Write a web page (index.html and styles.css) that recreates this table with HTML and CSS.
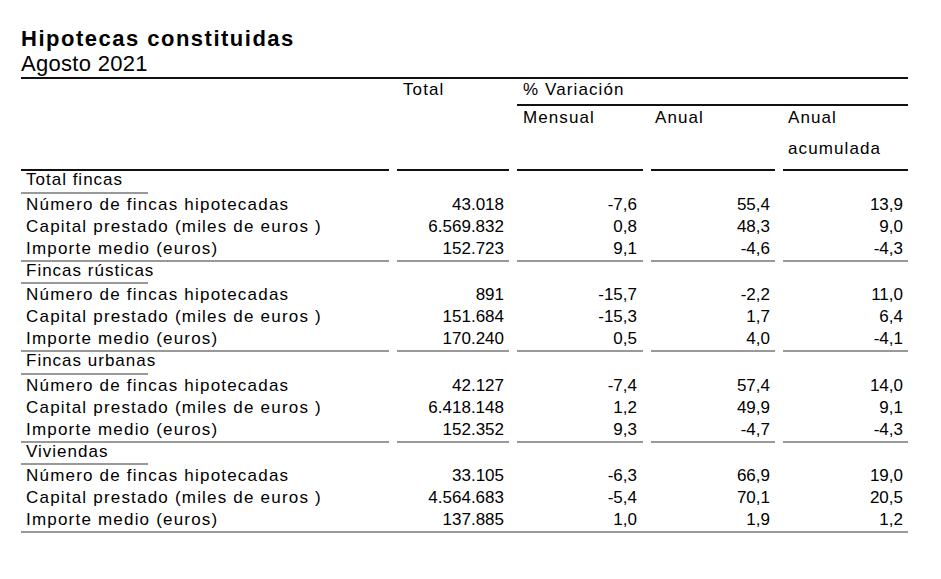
FILE: index.html
```html
<!DOCTYPE html>
<html lang="es">
<head>
<meta charset="utf-8">
<title>Hipotecas constituidas</title>
<link rel="stylesheet" href="styles.css">
</head>
<body>
<div class="page">
  <h1 class="title">Hipotecas constituidas</h1>
  <div class="subtitle">Agosto 2021</div>
  <div class="table">
    <div class="thead">
      <div class="th th-label"></div>
      <div class="th th-total">Total</div>
      <div class="th th-var">% Variación</div>
      <div class="th th-sub th-men">Mensual</div>
      <div class="th th-sub th-anu">Anual</div>
      <div class="th th-sub th-acu"><span class="l1">Anual</span><span class="l2">acumulada</span></div>
    </div>

    <div class="section">
      <div class="sec-head"><span>Total fincas</span></div>
      <div class="cell label">Número de fincas hipotecadas</div>
      <div class="cell num">43.018</div><div class="cell num men">-7,6</div><div class="cell num">55,4</div><div class="cell num">13,9</div>
      <div class="cell label">Capital prestado (miles de euros )</div>
      <div class="cell num">6.569.832</div><div class="cell num men">0,8</div><div class="cell num">48,3</div><div class="cell num">9,0</div>
      <div class="cell label last">Importe medio (euros)</div>
      <div class="cell num last">152.723</div><div class="cell num men last">9,1</div><div class="cell num last">-4,6</div><div class="cell num last">-4,3</div>
    </div>

    <div class="section">
      <div class="sec-head"><span>Fincas rústicas</span></div>
      <div class="cell label">Número de fincas hipotecadas</div>
      <div class="cell num">891</div><div class="cell num men">-15,7</div><div class="cell num">-2,2</div><div class="cell num">11,0</div>
      <div class="cell label">Capital prestado (miles de euros )</div>
      <div class="cell num">151.684</div><div class="cell num men">-15,3</div><div class="cell num">1,7</div><div class="cell num">6,4</div>
      <div class="cell label last">Importe medio (euros)</div>
      <div class="cell num last">170.240</div><div class="cell num men last">0,5</div><div class="cell num last">4,0</div><div class="cell num last">-4,1</div>
    </div>

    <div class="section">
      <div class="sec-head"><span>Fincas urbanas</span></div>
      <div class="cell label">Número de fincas hipotecadas</div>
      <div class="cell num">42.127</div><div class="cell num men">-7,4</div><div class="cell num">57,4</div><div class="cell num">14,0</div>
      <div class="cell label">Capital prestado (miles de euros )</div>
      <div class="cell num">6.418.148</div><div class="cell num men">1,2</div><div class="cell num">49,9</div><div class="cell num">9,1</div>
      <div class="cell label last">Importe medio (euros)</div>
      <div class="cell num last">152.352</div><div class="cell num men last">9,3</div><div class="cell num last">-4,7</div><div class="cell num last">-4,3</div>
    </div>

    <div class="section final">
      <div class="sec-head"><span>Viviendas</span></div>
      <div class="cell label">Número de fincas hipotecadas</div>
      <div class="cell num">33.105</div><div class="cell num men">-6,3</div><div class="cell num">66,9</div><div class="cell num">19,0</div>
      <div class="cell label">Capital prestado (miles de euros )</div>
      <div class="cell num">4.564.683</div><div class="cell num men">-5,4</div><div class="cell num">70,1</div><div class="cell num">20,5</div>
      <div class="cell label">Importe medio (euros)</div>
      <div class="cell num">137.885</div><div class="cell num men">1,0</div><div class="cell num">1,9</div><div class="cell num">1,2</div>
    </div>
  </div>
</div>
</body>
</html>
```
FILE: styles.css
```css
* { box-sizing: border-box; margin: 0; padding: 0; }
html, body { background: #ffffff; }
body {
  color: #000000;
  font-family: "Liberation Sans", Arial, sans-serif;
}
.page {
  padding: 26px 0 0 21px;
  width: 941px;
}
.title {
  font-size: 22px;
  font-weight: bold;
  line-height: 25px;
  letter-spacing: 1.5px;
}
.subtitle {
  font-size: 22px;
  line-height: 26px;
  letter-spacing: 0.3px;
}
.table {
  width: 887px;
  border-top: 2px solid #111111;
}
.thead, .section {
  display: grid;
  grid-template-columns: 368px 112px 126px 124px 125px;
  column-gap: 8px;
}
.thead {
  grid-template-rows: 27px 65px;
}
.th {
  font-size: 17px;
  line-height: 22px;
  letter-spacing: 1.1px;
  border-bottom: 2px solid #111111;
  padding-left: 6px;
  white-space: nowrap;
}
.th-label { grid-row: 1 / 3; grid-column: 1; }
.th-total { grid-row: 1 / 3; grid-column: 2; }
.th-var { grid-row: 1; grid-column: 3 / 6; }
.th-sub { grid-row: 2; padding-top: 1px; }
.th-anu { padding-left: 4px; }
.th-acu { padding-left: 5px; }
.th-acu .l1, .th-acu .l2 { display: block; }
.th-acu .l2 { margin-top: 9px; }

.sec-head {
  grid-column: 1 / -1;
  font-size: 17px;
  line-height: 17px;
  letter-spacing: 1px;
  white-space: nowrap;
}
.sec-head span {
  display: block;
  width: 127px;
  padding: 0 0 3.5px 5px;
  border-bottom: 2px solid #999999;
}
.cell {
  font-size: 17px;
  line-height: 22px;
  white-space: nowrap;
}
.label {
  padding-left: 5px;
  letter-spacing: 1.2px;
}
.num {
  text-align: right;
  padding-right: 5px;
}
.num.men { padding-right: 6px; }
.last { border-bottom: 2px solid #999999; }
.section.final { border-bottom: 2px solid #999999; }
```
